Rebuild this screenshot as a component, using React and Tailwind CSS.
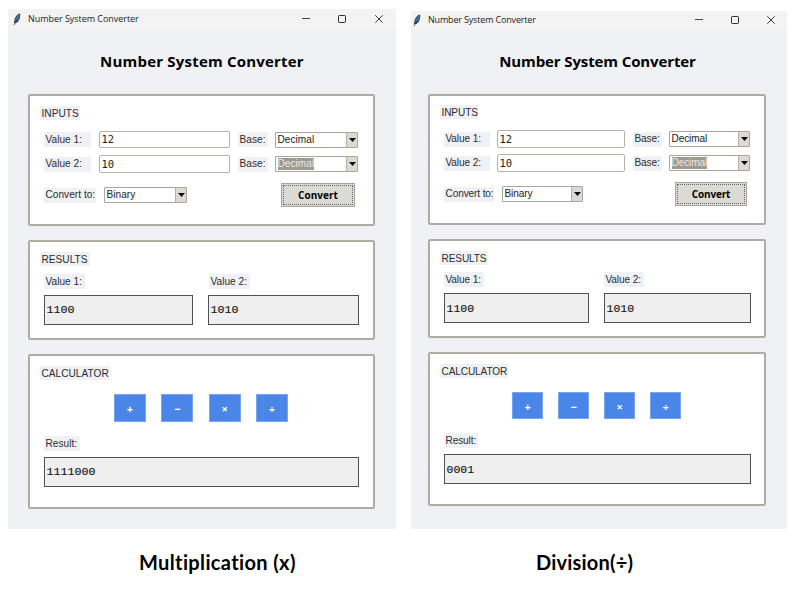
import React from "react";

const SANS = "font-['Liberation_Sans',Arial,sans-serif]";
const SEGOE = "font-['Open_Sans','Noto_Sans',sans-serif]";

const LEFT = {
  window: "mt-[9px] ml-[8px] w-[388px] h-[520px]",
  titlebar: "h-[20px] pl-[5px]",
  titleText: "text-[9px] tracking-[-0.04px] ml-[7px]",
  minimize: "mr-[28px]",
  maximize: "mr-[29px]",
  close: "mr-[13px]",
  heading: "text-[15px] tracking-[0.2px] mt-[22px] h-[20px] leading-[20px] pl-0",
  headingGap: "mb-[23px]",
  font: "text-[10.1px] tracking-[0.03px]",
  cards: "ml-[20px] w-[347px] gap-y-[14px]",
  inputs: "h-[132px] pt-[10px]",
  inputsTitle: "w-[40px] h-[14px]",
  row1: "mt-[11px] h-[17px]",
  row2: "mt-[7px] h-[18px]",
  row3: "mt-[10px] h-[24px]",
  valueLabel: "w-[47px]",
  entry: "ml-[8px] w-[131px]",
  baseLabel: "ml-[8px] w-[30px]",
  combo: "ml-[7px] w-[83px]",
  convertLabel: "w-[52px]",
  convertCombo: "ml-[8px] w-[83px]",
  button: "ml-[94px] w-[74px] h-[24px] text-[10px]",
  results: "h-[100px] pt-[10px]",
  resultsTitle: "w-[50px] h-[14px]",
  resultLabels: "mt-[8px]",
  resultLabel1: "w-[41px]",
  resultLabel2: "ml-[124px] w-[41px]",
  resultBoxes: "mt-[6px]",
  resultBox1: "w-[149px]",
  resultBox2: "ml-[15px] w-[151px]",
  calc: "h-[155px] pt-[10px]",
  calcTitle: "w-[70px] h-[14px]",
  ops: "mt-[14px] ml-[70px] gap-x-[15.3px]",
  op: "w-[32px] h-[28px]",
  resultLabel: "mt-[14px] w-[36px]",
  totalBox: "mt-[6px] w-[315px]",
  mono: "text-[11.7px] pt-[2px]",
};

const RIGHT = {
  window: "mt-[11px] ml-[15px] w-[376px] h-[518px]",
  titlebar: "h-[18px] pl-[2px]",
  titleText: "text-[9px] tracking-[-0.17px] ml-[7px]",
  minimize: "mr-[28px]",
  maximize: "mr-[28px]",
  close: "mr-[12px]",
  heading: "text-[15px] mt-[22px] h-[20px] leading-[20px] pr-[3px]",
  headingGap: "mb-[23px]",
  font: "text-[10.1px] tracking-[-0.12px]",
  cards: "ml-[17px] w-[338px] gap-y-[14px]",
  inputs: "h-[131px] pt-[9px]",
  inputsTitle: "w-[38px] h-[14px]",
  row1: "mt-[11px] h-[18px]",
  row2: "mt-[6px] h-[18px]",
  row3: "mt-[10px] h-[24px]",
  valueLabel: "w-[46px]",
  entry: "ml-[7px] w-[128px]",
  baseLabel: "ml-[8px] w-[29px]",
  combo: "ml-[7px] w-[81px]",
  convertLabel: "w-[50px]",
  convertCombo: "ml-[8px] w-[81px]",
  button: "ml-[92px] w-[72px] h-[24px] text-[10px] tracking-[-0.15px]",
  results: "h-[99px] pt-[10px]",
  resultsTitle: "w-[48px] h-[14px]",
  resultLabels: "mt-[7px]",
  resultLabel1: "w-[40px]",
  resultLabel2: "ml-[120px] w-[40px]",
  resultBoxes: "mt-[6px]",
  resultBox1: "w-[145px]",
  resultBox2: "ml-[15px] w-[147px]",
  calc: "h-[154px] pt-[10px]",
  calcTitle: "w-[68px] h-[14px]",
  ops: "mt-[14px] ml-[68px] gap-x-[15px]",
  op: "w-[31px] h-[27px]",
  resultLabel: "mt-[14px] w-[34px]",
  totalBox: "mt-[6px] w-[307px]",
  mono: "text-[11.5px] pt-[2px]",
};

function Feather() {
  return (
    <svg className="h-[13px] w-[8px] shrink-0" viewBox="0 0 8 13">
      <path d="M7.2 0.4C4.4 0.8 1.2 4 1 9.8l0.9 0.5C5.6 9.4 7.6 5.2 7.2 0.4Z" fill="#33465c" />
      <path d="M6.5 1.4C4 3 2.4 5.6 2.1 9C4.8 7.6 6.4 5 6.5 1.4Z" fill="#5b93cb" />
      <path d="M5.4 3.6 1 12.2" stroke="#20252c" strokeWidth="0.7" />
    </svg>
  );
}

function Title({ className, children }) {
  return (
    <div className={`${className} flex items-center bg-[#f0f1f5] pt-px pl-[1.5px] whitespace-nowrap text-[#2c2c30]`}>
      {children}
    </div>
  );
}

function Label({ className, children }) {
  return (
    <div className={`${className} flex h-[15px] shrink-0 items-center bg-[#f0f1f5] pl-[1.5px] whitespace-nowrap text-[#2c2c30]`}>
      {children}
    </div>
  );
}

function Entry({ className, value }) {
  return (
    <div className={`${className} flex h-full shrink-0 items-center rounded-[2px] border border-[#b5b2a9] bg-white pt-px pl-[1.5px] font-['DejaVu_Sans_Mono',monospace] text-[10.5px] tracking-normal text-[#1c1c1c]`}>
      {value}
    </div>
  );
}

function Combo({ className, value, selected }) {
  return (
    <div className={`${className} flex h-[16px] shrink-0 items-center justify-between rounded-[1px] border border-[#aaa69d] bg-white pl-[1.5px] text-[#222]`}>
      <span className={selected ? "bg-[#9f9a90] leading-[12px] text-[#e9e7e2]" : "leading-[12px]"}>{value}</span>
      <span className="flex h-full w-[11px] items-center justify-center border-l border-[#b3b0a8] bg-[#dcdad5]">
        <svg className="h-[4px] w-[7px]" viewBox="0 0 7 4">
          <path d="M0 0H7L3.5 4Z" fill="#0a0a0a" />
        </svg>
      </span>
    </div>
  );
}

function Output({ className, mono, value }) {
  return (
    <div className={`${className} ${mono} flex h-[30px] shrink-0 items-center border border-[#515151] bg-[#efefef] pl-[1.5px] font-['Liberation_Mono','Courier_New',monospace] tracking-normal text-[#111] [-webkit-text-stroke:0.15px_#222]`}>
      {value}
    </div>
  );
}

function Card({ className, children }) {
  return (
    <section className={`${className} rounded-[2px] border-2 border-[#b0aca3] bg-white pl-[10px]`}>
      {children}
    </section>
  );
}

function ConverterWindow({ m, total }) {
  return (
    <div className={`${m.window} ${m.font} ${SANS} shrink-0 bg-[#f0f1f5]`}>
      <header className={`${m.titlebar} flex items-center bg-[#f3f3f3]`}>
        <Feather />
        <span className={`${m.titleText} ${SEGOE} grow whitespace-nowrap text-[#1c1c1c]`}>Number System Converter</span>
        <svg className={`${m.minimize} size-[8px]`} viewBox="0 0 8 8">
          <path d="M0 3.5H8" stroke="#444" />
        </svg>
        <svg className={`${m.maximize} size-[8px]`} viewBox="0 0 8 8" fill="none">
          <rect x="0.5" y="0.5" width="7" height="7" rx="0.7" stroke="#333" />
        </svg>
        <svg className={`${m.close} size-[8px]`} viewBox="0 0 8 8">
          <path d="M0.3 0.3 7.7 7.7M7.7 0.3 0.3 7.7" stroke="#222" strokeWidth="0.9" />
        </svg>
      </header>
      <h1 className={`${m.heading} ${m.headingGap} ${SEGOE} text-center font-bold whitespace-nowrap text-black`}>
        Number System Converter
      </h1>
      <main className={`${m.cards} flex flex-col`}>
        <Card className={m.inputs}>
          <Title className={m.inputsTitle}>INPUTS</Title>
          <div className="pl-1">
            <div className={`${m.row1} flex items-center`}>
              <Label className={m.valueLabel}>Value 1:</Label>
              <Entry className={m.entry} value="12" />
              <Label className={m.baseLabel}>Base:</Label>
              <Combo className={m.combo} value="Decimal" />
            </div>
            <div className={`${m.row2} flex items-center`}>
              <Label className={m.valueLabel}>Value 2:</Label>
              <Entry className={m.entry} value="10" />
              <Label className={m.baseLabel}>Base:</Label>
              <Combo className={m.combo} value="Decimal" selected />
            </div>
            <div className={`${m.row3} flex items-center`}>
              <Label className={m.convertLabel}>Convert to:</Label>
              <Combo className={m.convertCombo} value="Binary" />
              <button className={`${m.button} ${SEGOE} flex shrink-0 border border-[#aaa69d] bg-[#dcdad5] p-px font-bold text-black`}>
                <span className="flex h-full w-full items-center justify-center border border-dotted border-[#666] pt-px">Convert</span>
              </button>
            </div>
          </div>
        </Card>
        <Card className={m.results}>
          <Title className={m.resultsTitle}>RESULTS</Title>
          <div className="pl-1">
            <div className={`${m.resultLabels} flex`}>
              <Label className={m.resultLabel1}>Value 1:</Label>
              <Label className={m.resultLabel2}>Value 2:</Label>
            </div>
            <div className={`${m.resultBoxes} flex`}>
              <Output className={m.resultBox1} mono={m.mono} value="1100" />
              <Output className={m.resultBox2} mono={m.mono} value="1010" />
            </div>
          </div>
        </Card>
        <Card className={m.calc}>
          <Title className={m.calcTitle}>CALCULATOR</Title>
          <div className="pl-1">
            <div className={`${m.ops} flex`}>
              {["+", "−", "×", "÷"].map((op) => (
                <button
                  key={op}
                  className={`${m.op} ${SEGOE} flex shrink-0 items-center justify-center border border-[#79a6ee] bg-[#4a86e8] pt-[3px] text-[11px] font-bold text-white`}
                >
                  {op}
                </button>
              ))}
            </div>
            <Label className={m.resultLabel}>Result:</Label>
            <Output className={m.totalBox} mono={m.mono} value={total} />
          </div>
        </Card>
      </main>
    </div>
  );
}

export default function App() {
  const caption = "font-['Lato',sans-serif] font-bold text-[20px] leading-[26px] whitespace-nowrap text-black";
  return (
    <div className="h-[613px] w-[794px] overflow-hidden bg-white">
      <div className="flex h-[529px]">
        <ConverterWindow m={LEFT} total="1111000" />
        <ConverterWindow m={RIGHT} total="0001" />
      </div>
      <div className="flex pt-[20px]">
        <div className={`${caption} ml-[139px] w-[397px] tracking-[0.37px]`}>Multiplication (x)</div>
        <div className={`${caption} tracking-[0.2px]`}>Division(÷)</div>
      </div>
    </div>
  );
}
